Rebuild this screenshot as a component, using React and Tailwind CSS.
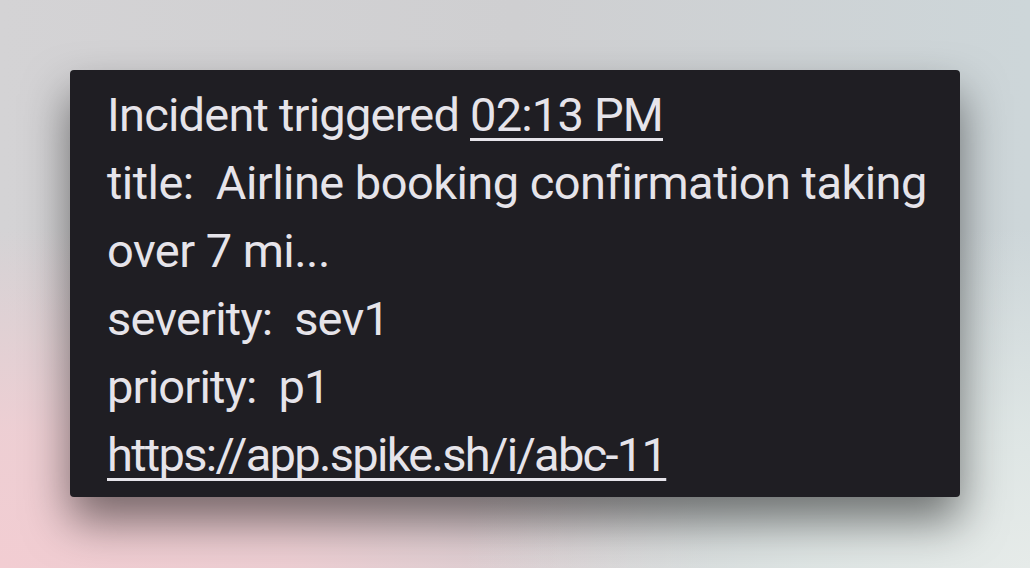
export default function App() {
  return (
    <div className="relative w-[1030px] h-[568px] overflow-hidden bg-[linear-gradient(90deg,#d4d3d5_0%,#cfcfd1_50%,#cdd6d9_100%)]">
      <div className="absolute inset-0 bg-[radial-gradient(ellipse_70%_60%_at_0%_100%,#f2cdd2_0%,rgba(240,206,211,0.9)_40%,rgba(240,208,212,0)_100%)]" />
      <div className="absolute inset-0 bg-[radial-gradient(ellipse_55%_60%_at_100%_100%,#e6ebe9_0%,rgba(226,233,231,0.8)_40%,rgba(226,233,231,0)_100%)]" />
      <div className="relative pt-[70px] pl-[70px]">
        <div
          className="w-[890px] h-[427px] rounded-[4px] bg-[#1f1e23] pl-[37px] pr-[10px] pt-[11px] text-[#e6e4ea] text-[47px] leading-[68px] tracking-[-0.8px] shadow-[0_24px_45px_rgba(0,0,0,0.5)]"
          style={{ fontFamily: 'Roboto, "Noto Sans", sans-serif' }}
        >
          <div>
            Incident triggered <span className="underline decoration-[3px] underline-offset-[7px] [text-decoration-skip-ink:none]">02:13 PM</span>
          </div>
          <div className="whitespace-pre-wrap tracking-[-0.55px]">title:  Airline booking confirmation taking over 7 mi...</div>
          <div className="whitespace-pre-wrap">severity:  sev1</div>
          <div className="whitespace-pre-wrap">priority:  p1</div>
          <div>
            <span className="underline decoration-[3px] underline-offset-[7px] tracking-[-1.7px] [text-decoration-skip-ink:none]">https://app.spike.sh/i/abc-11</span>
          </div>
        </div>
      </div>
    </div>
  );
}
